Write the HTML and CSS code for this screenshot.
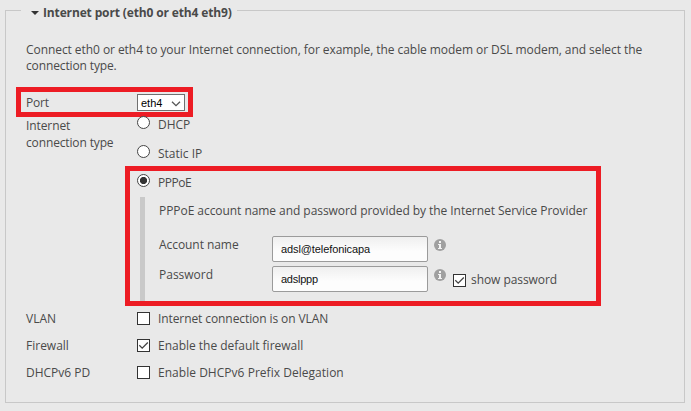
FILE: index.html
```html
<!DOCTYPE html>
<html lang="en">
<head>
<meta charset="utf-8">
<title>Internet port</title>
<link rel="stylesheet" href="styles.css">
</head>
<body>
<svg class="defs" width="0" height="0">
  <symbol id="info" viewBox="0 0 12 12"><circle cx="6" cy="6" r="6" fill="#a0a0a0"/><path d="M5 2h2v2H5zM4 5h3v4h1v1H4V9h1V6H4z" fill="#f4f4f4"/></symbol>
  <symbol id="tick" viewBox="0 0 13 13"><path d="M2.3 6.3 5.2 9.2 10.8 3.5" fill="none" stroke="#444" stroke-width="1.3"/></symbol>
</svg>
<section class="frame">
  <h2 class="title"><svg class="caret" width="8" height="4"><path d="M0 0h8L4 4z" fill="#333"/></svg><span class="heading">Internet port (eth0 or eth4 eth9)</span></h2>
  <p class="intro"><span class="intro1">Connect eth0 or eth4 to your Internet connection, for example, the cable modem or DSL modem, and select the</span><br><span class="intro2">connection type.</span></p>

  <div class="row port">
    <span class="t-port">Port</span>
    <div class="select"><span>eth4</span><svg width="10" height="6"><path d="M1 .8 5 4.6 9 .8" fill="none" stroke="#555" stroke-width="1.3"/></svg></div>
    <div class="highlight hl-port"></div>
  </div>

  <div class="row type">
    <span class="typelabel"><span class="t-int">Internet</span><br><span class="t-ct">connection type</span></span>
    <div>
      <div class="option"><i class="radio"></i><span class="t-dhcp">DHCP</span></div>
      <div class="option"><i class="radio"></i><span class="t-static">Static IP</span></div>
      <div class="option last"><i class="radio on"></i><span class="t-pppoe">PPPoE</span></div>
      <div class="panel">
        <p class="note"><span class="t-note">PPPoE account name and password provided by the Internet Service Provider</span></p>
        <div class="field"><span class="label"><span class="t-acc">Account name</span></span><div class="input"><span class="v-acc">adsl@telefonicapa</span></div><svg class="info" width="12" height="12"><use href="#info"/></svg></div>
        <div class="field"><span class="label"><span class="t-pass">Password</span></span><div class="input"><span class="v-pass">adslppp</span></div><svg class="info" width="12" height="12"><use href="#info"/></svg><i class="box show"><svg width="13" height="13"><use href="#tick"/></svg></i><span class="showlabel"><span class="t-show">show password</span></span></div>
      </div>
    </div>
    <div class="highlight hl-pppoe"></div>
  </div>

  <div class="row check"><span class="t-vlan">VLAN</span><div class="option"><i class="box"></i><span class="t-onvlan">Internet connection is on VLAN</span></div></div>
  <div class="row check"><span class="t-fw">Firewall</span><div class="option"><i class="box"><svg width="13" height="13"><use href="#tick"/></svg></i><span class="t-enfw">Enable the default firewall</span></div></div>
  <div class="row check"><span class="t-pd">DHCPv6 PD</span><div class="option"><i class="box"></i><span class="t-enpd">Enable DHCPv6 Prefix Delegation</span></div></div>
</section>
</body>
</html>
```
FILE: styles.css
```css
* { box-sizing: border-box; }
body { margin: 0; height: 411px; padding: 10px 6px 0 5px; background: #e9e9e9; color: #4a4a4a; font: 12px/16px "Open Sans", "Noto Sans", sans-serif; white-space: nowrap; overflow: hidden; }
.defs { position: absolute; }
.frame { height: 393px; border: 1px solid #c8c8c8; padding-left: 20px; }
.title { display: flex; width: 216px; height: 16px; margin: -6px 0 21px -5px; padding-left: 10px; background: #e9e9e9; font-size: 12px; line-height: 16px; font-weight: 700; }
.heading { letter-spacing: -.14px; }
.caret { margin: 6px 4px 0 0; }
.intro, .note { margin: 0; }
.intro { height: 45px; }
.intro1 { letter-spacing: -.064px; }
.intro2 { letter-spacing: -.13px; }
.row { display: grid; grid-template-columns: 111px 1fr; position: relative; align-items: start; }
.port { height: 30px; padding-top: 8px; }
.t-port { letter-spacing: -.2px; }
.select { display: flex; justify-content: space-between; width: 48px; height: 17px; margin-top: -1px; padding: 0 3px; border: 1px solid #707070; background: #fff; color: #000; font: 11px/16px "Liberation Sans", Arial, sans-serif; }
.select svg { margin-top: 6px; }
.type { height: 194px; }
.typelabel { line-height: 17px; }
.t-int { letter-spacing: -.1px; }
.t-ct { letter-spacing: -.14px; }
.t-pppoe { letter-spacing: -.5px; }
.t-note { letter-spacing: -.055px; }
.t-acc, .t-show { letter-spacing: -.06px; }
.v-acc { letter-spacing: -.1px; }
.v-pass { letter-spacing: -.25px; }
.t-onvlan { letter-spacing: -.09px; }
.t-enfw { letter-spacing: -.02px; }
.t-enpd { letter-spacing: .03px; }
.option { display: flex; height: 29px; gap: 8px; }
.last { height: 22px; }
.radio { width: 13px; height: 13px; margin-top: -1px; border: 1px solid #444; border-radius: 50%; background: #fff; }
.on { background: radial-gradient(circle, #333 0 3.3px, #fff 3.9px); }
.panel { height: 104px; margin-left: 3px; padding: 6px 0 0 14px; border-left: 5px solid #c9c9c9; }
.note { height: 33px; }
.field { display: flex; height: 30px; }
.label { width: 113px; padding-top: 1px; }
.input { width: 156px; height: 26px; padding-left: 8px; border: 1px solid #9b9b9b; border-radius: 2px; background: linear-gradient(#efefef, #fdfdfd 60%); color: #111; font: 11px/25px "Liberation Sans", Arial, sans-serif; }
.info { margin: 3px 0 0 6px; }
.box { display: block; width: 13px; height: 13px; margin-top: 1px; border: 1px solid #333; background: #fff; }
.box svg { display: block; margin: -1px; }
.show { margin: 8px 5px 0 7px; }
.showlabel { padding-top: 6px; }
.check { height: 27px; }
.highlight { position: absolute; border: 5px solid #ed1c24; }
.hl-port { left: -10px; top: 0; width: 177px; height: 30px; }
.hl-pppoe { left: 99px; top: 49px; width: 476px; height: 140px; }
```
